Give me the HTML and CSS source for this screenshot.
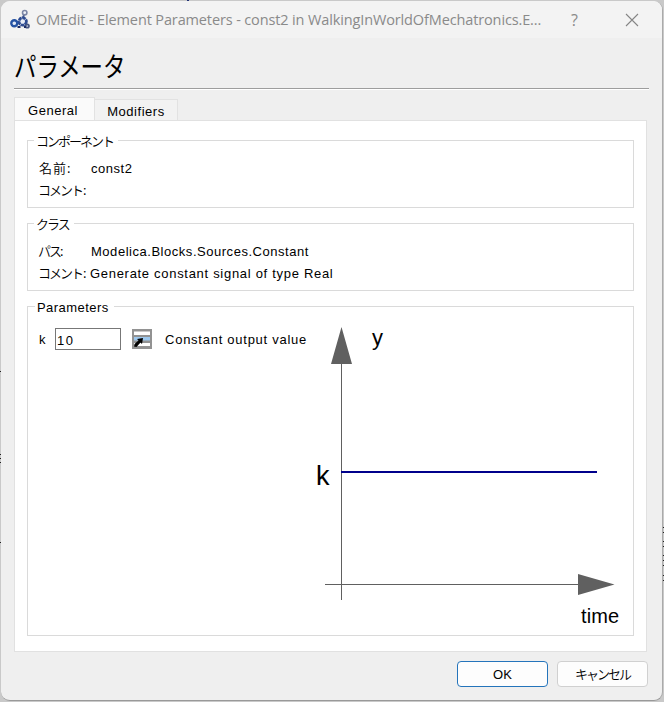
FILE: index.html
```html
<!DOCTYPE html>
<html lang="ja">
<head>
<meta charset="utf-8">
<title>OMEdit</title>
<link rel="stylesheet" href="styles.css">
</head>
<body>
<svg class="behind" width="664" height="702" viewBox="0 0 664 702">
  <path d="M662 527.5h2M662 532.5h2M662 541.5h2M663 546.5h1M662 555.5h2M663 560.5h1M662 565.5h2M662 575.5h2M662 580.5h2M0 371.5h1M0 454.5h1M0 458.5h1M0 462.5h1M0 542.5h1" stroke="#222"/>
  <path d="M187 .5h2" stroke="#223377"/>
</svg>
<main class="dialog">
  <header class="titlebar">
    <svg class="logo" width="20" height="20" viewBox="0 0 20 20">
      <path d="M14 5L12 11L4 14M12 11L17 17" stroke="#40558c" stroke-width="2" fill="none"/>
      <circle cx="14.7" cy="2.7" r="2.2" fill="#eef1f8" stroke="#7b86a6" stroke-width="1.6"/>
      <circle cx="12.7" cy="11.5" r="3.7" fill="#e8edf7" stroke="#2e4c92" stroke-width="2.8" stroke-dasharray="3.6 .5"/>
      <circle cx="4.3" cy="13.3" r="3" fill="#e3eaf7" stroke="#2553a4" stroke-width="2.4"/>
      <circle cx="17.3" cy="16" r="1.7" fill="#c5cde1" stroke="#465681" stroke-width="1.7"/>
      <path d="M7.5 17h3M14 17h2" stroke="#182b66" stroke-width="2"/>
    </svg>
    <span class="caption">OMEdit - Element Parameters - const2 in WalkingInWorldOfMechatronics.E...</span>
    <span class="help">?</span>
    <svg class="close" width="14" height="14" viewBox="0 0 14 14"><path d="M1 1L13 13M13 1L1 13" stroke="#858585" stroke-width="1.1"/></svg>
  </header>
  <h1 class="heading"><span>パラメータ</span></h1>
  <nav class="tabs">
    <span class="tab active">General</span>
    <span class="tab">Modifiers</span>
  </nav>
  <div class="panel">
    <section class="group info">
      <h2 class="legend"><span class="jp">コンポーネント</span></h2>
      <div class="row"><span class="label kanji">名前:</span><span class="latin">const2</span></div>
      <div class="row"><span class="label jp">コメント<i>:</i></span></div>
    </section>
    <section class="group info second">
      <h2 class="legend"><span class="jp">クラス</span></h2>
      <div class="row"><span class="label jp">パス<i class="near">:</i></span><span class="latin">Modelica.Blocks.Sources.Constant</span></div>
      <div class="row"><span class="label jp">コメント<i>:</i></span><span class="latin comment">Generate constant signal of type Real</span></div>
    </section>
    <section class="group params">
      <h2 class="legend latin">Parameters</h2>
      <div class="content">
        <div class="param">
          <span class="latin">k</span>
          <input class="value" type="text" value="10">
          <svg class="picker" width="20" height="20" viewBox="0 0 20 20">
            <path d="M0 0h20v20H0z" fill="#929292"/>
            <path d="M2 2.5h16v3.5H2zM2 14h16v3H2z" fill="#fff"/>
            <path d="M2 8h16v3.5H2z" fill="#9dc8ee"/>
            <path d="M11 9L10 15 8.5 13.5 4.5 18 2 17.5 2.5 15 6.5 11.5 5 10z" fill="#000"/>
          </svg>
          <span class="desc latin">Constant output value</span>
        </div>
        <svg class="plot" width="310" height="310" viewBox="314 320 310 310">
          <path d="M341.5 362V600M325 584.5H579" stroke="#606060" fill="none"/>
          <path d="M341.5 327L352 364H331zM578 574L614.5 584.5 578 595z" fill="#606060"/>
          <path d="M341 472H597" stroke="#00008b" stroke-width="2"/>
          <text class="y-label" x="372" y="345">y</text>
          <text class="k-label" x="316" y="485">k</text>
          <text class="t-label" x="581" y="623" textLength="38">time</text>
        </svg>
      </div>
    </section>
  </div>
  <footer class="actions">
    <button class="button primary"><span class="ok">OK</span></button>
    <button class="button"><span class="jp">キャンセル</span></button>
  </footer>
</main>
</body>
</html>
```
FILE: styles.css
```css
* { box-sizing: border-box; }
body {
  position: relative;
  margin: 0;
  padding: 1px;
  height: 702px;
  overflow: hidden;
  background: #c9c9c9;
  font: 13px/22px "Liberation Sans", "Noto Sans CJK JP", sans-serif;
  letter-spacing: .53px;
  color: #000;
}
.behind { position: absolute; left: 0; top: 0; }
.dialog {
  position: relative;
  width: 662px;
  height: 700px;
  background: #efefef;
  border-right: 1px solid #aaa;
  border-bottom: 1px solid #999;
  border-radius: 9px;
  overflow: hidden;
}
.titlebar {
  display: flex;
  align-items: center;
  height: 37px;
  padding-left: 9px;
  background: #f3f3f3;
  color: #8a8a8a;
  font: 15px/20px "Open Sans", sans-serif;
}
.logo { flex: none; overflow: visible; }
.caption { width: 530px; margin-left: 6px; font-size: 14.5px; letter-spacing: -.13px; white-space: nowrap; }
.help { width: 54px; margin-left: 5px; font-size: 16px; }
.close { flex: none; }
.heading {
  margin: 0 13px;
  height: 51px;
  border-bottom: 1px solid #9d9d9d;
  box-shadow: 0 1px #fff;
  font: 400 27px/56px "Noto Sans CJK JP", sans-serif;
  letter-spacing: 0;
}
.heading span { display: inline-block; transform: scaleX(.83); transform-origin: left; }
.tabs { display: flex; align-items: flex-end; height: 31px; padding-left: 13px; }
.tab {
  width: 83px;
  height: 21px;
  padding-top: 1px;
  border: 1px solid #e2e2e2;
  border-left: 0;
  border-bottom: 0;
  background: #f2f2f2;
  text-align: center;
}
.tab.active { width: 81px; height: 23px; border-left: 1px solid #e2e2e2; background: #fafafa; padding: 2px 3px 0 0; }
.panel {
  width: 633px;
  height: 532px;
  margin-left: 13px;
  padding: 19px 12px 0;
  border: 1px solid #e1e1e1;
  background: #fff;
}
.group { width: 607px; border: 1px solid #dadada; }
.info { height: 68px; margin-bottom: 15px; padding-left: 10px; }
.legend {
  width: max-content;
  height: 18px;
  margin: -10px 0 0 -4px;
  padding: 1px 5px 0 3px;
  background: #fff;
  font: inherit;
  line-height: 18px;
}
.jp, .kanji { font-family: "Noto Sans CJK JP", sans-serif; font-weight: 350; white-space: nowrap; }
.jp { letter-spacing: -2px; }
.legend .jp { margin-left: -1px; }
.kanji { padding-left: 1px; letter-spacing: 1px; }
.row { display: flex; height: 22px; }
.info .row:nth-child(2) { margin-top: 8px; }
.label { width: 53px; }
.label i { font-style: normal; margin-left: 1px; }
.label .near { margin-left: 0; }
.row .latin, .param .latin { position: relative; top: 1px; }
.comment { letter-spacing: .7px; margin-left: -1px; }
.params { height: 330px; padding-left: 11px; }
.params .legend { margin: -9px 0 0 -4px; padding: 1px 5px 0 2px; letter-spacing: .45px; }
.content { display: flex; align-items: flex-start; padding-top: 4px; }
.param { display: flex; align-items: center; width: 275px; height: 22px; margin-top: 8px; }
.value {
  width: 66px;
  height: 22px;
  margin: 0 11px 0 9px;
  padding: 3px 1px 0;
  border: 1px solid #777;
  background: #fff;
  font: inherit;
  letter-spacing: 1.4px;
}
.picker { flex: none; }
.desc { margin-left: 13px; white-space: nowrap; letter-spacing: .74px; }
.plot { flex: none; letter-spacing: 0; }
.y-label { font-size: 22px; }
.k-label { font-size: 27px; }
.t-label { font-size: 20px; }
.actions { display: flex; gap: 9px; padding: 9px 0 0 456px; }
.button {
  width: 91px;
  height: 26px;
  padding: 0;
  border: 1px solid #d0d0d0;
  border-radius: 4px;
  background: #fdfdfd;
  color: #000;
  font: inherit;
}
.primary { border-color: #2474bb; }
.ok { display: block; padding-top: 2px; }
```
